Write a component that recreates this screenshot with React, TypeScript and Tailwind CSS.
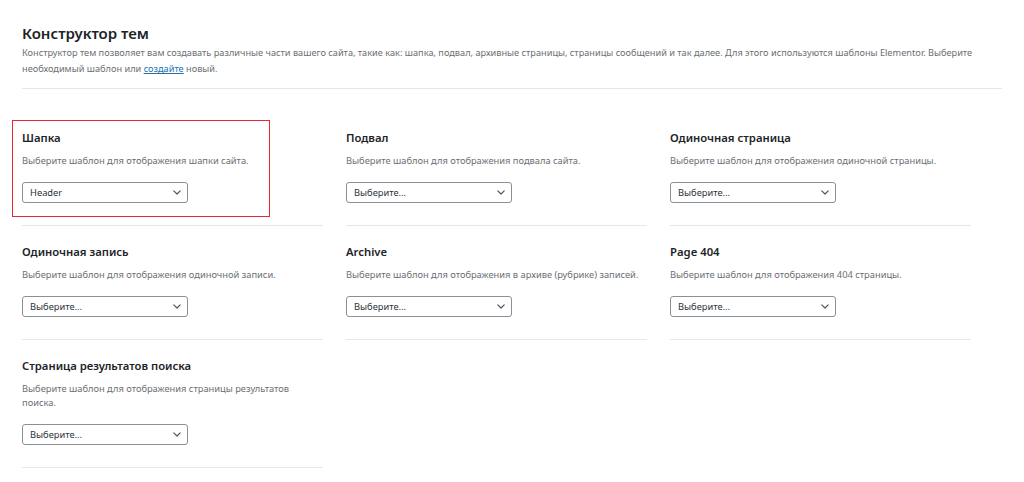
import React from "react";

const cards = [
  { title: "Шапка", desc: "Выберите шаблон для отображения шапки сайта.", value: "Header", highlight: true },
  { title: "Подвал", desc: "Выберите шаблон для отображения подвала сайта.", value: "Выберите..." },
  { title: "Одиночная страница", desc: "Выберите шаблон для отображения одиночной страницы.", value: "Выберите..." },
  { title: "Одиночная запись", desc: "Выберите шаблон для отображения одиночной записи.", value: "Выберите..." },
  { title: "Archive", desc: "Выберите шаблон для отображения в архиве (рубрике) записей.", value: "Выберите..." },
  { title: "Page 404", desc: "Выберите шаблон для отображения 404 страницы.", value: "Выберите..." },
  { title: "Страница результатов поиска", desc: "Выберите шаблон для отображения страницы результатов поиска.", value: "Выберите..." },
];

function Chevron() {
  return (
    <svg width="8" height="5" viewBox="0 0 8 5" fill="none" className="mr-[6px]">
      <path d="M0.8 0.8L4 4L7.2 0.8" stroke="#50575e" strokeWidth="1.2" strokeLinecap="round" strokeLinejoin="round" />
    </svg>
  );
}

export default function App() {
  return (
    <div className="w-[1024px] h-[482px] bg-white overflow-hidden" style={{ fontFamily: '"Noto Sans", "Open Sans", sans-serif' }}>
      <div className="pl-[22px] pt-[21px]">
        <h1 className="text-[15px] font-semibold leading-[24px] text-[#1d2327]">Конструктор тем</h1>
        <p className="w-[980px] text-[9.2px] leading-[16px] text-[#6b6f74]">
          Конструктор тем позволяет вам создавать различные части вашего сайта, такие как: шапка, подвал, архивные страницы, страницы сообщений и так далее. Для этого используются шаблоны Elementor. Выберите необходимый шаблон или{" "}
          <a className="text-[#2271b1] underline">создайте</a> новый.
        </p>
        <div className="mt-[11px] h-px w-[980px] bg-[#e6e7e8]" />
        <div className="mt-[23px] grid grid-cols-[301px_301px_301px] gap-x-[23px]">
          {cards.map((c) => (
            <div key={c.title} className="relative border-b border-[#e6e7e8] pt-[17px] pb-[22px]">
              {c.highlight && (
                <div className="absolute left-[-10px] top-[8px] w-[258px] h-[97px] border-[1.5px] border-[#e8272f]" />
              )}
              <h2 className="text-[11.3px] font-semibold leading-[18px] text-[#1d2327]">{c.title}</h2>
              <p className="mt-[7px] w-[301px] text-[9.3px] leading-[14px] text-[#6b6f74]">{c.desc}</p>
              <div className="mt-[14px] flex h-[21px] w-[166px] items-center justify-between rounded-[3px] border border-[#8c8f94] bg-white pl-[7px]">
                <span className="text-[9.3px] text-[#2c3338] leading-none">{c.value}</span>
                <Chevron />
              </div>
            </div>
          ))}
        </div>
      </div>
    </div>
  );
}
